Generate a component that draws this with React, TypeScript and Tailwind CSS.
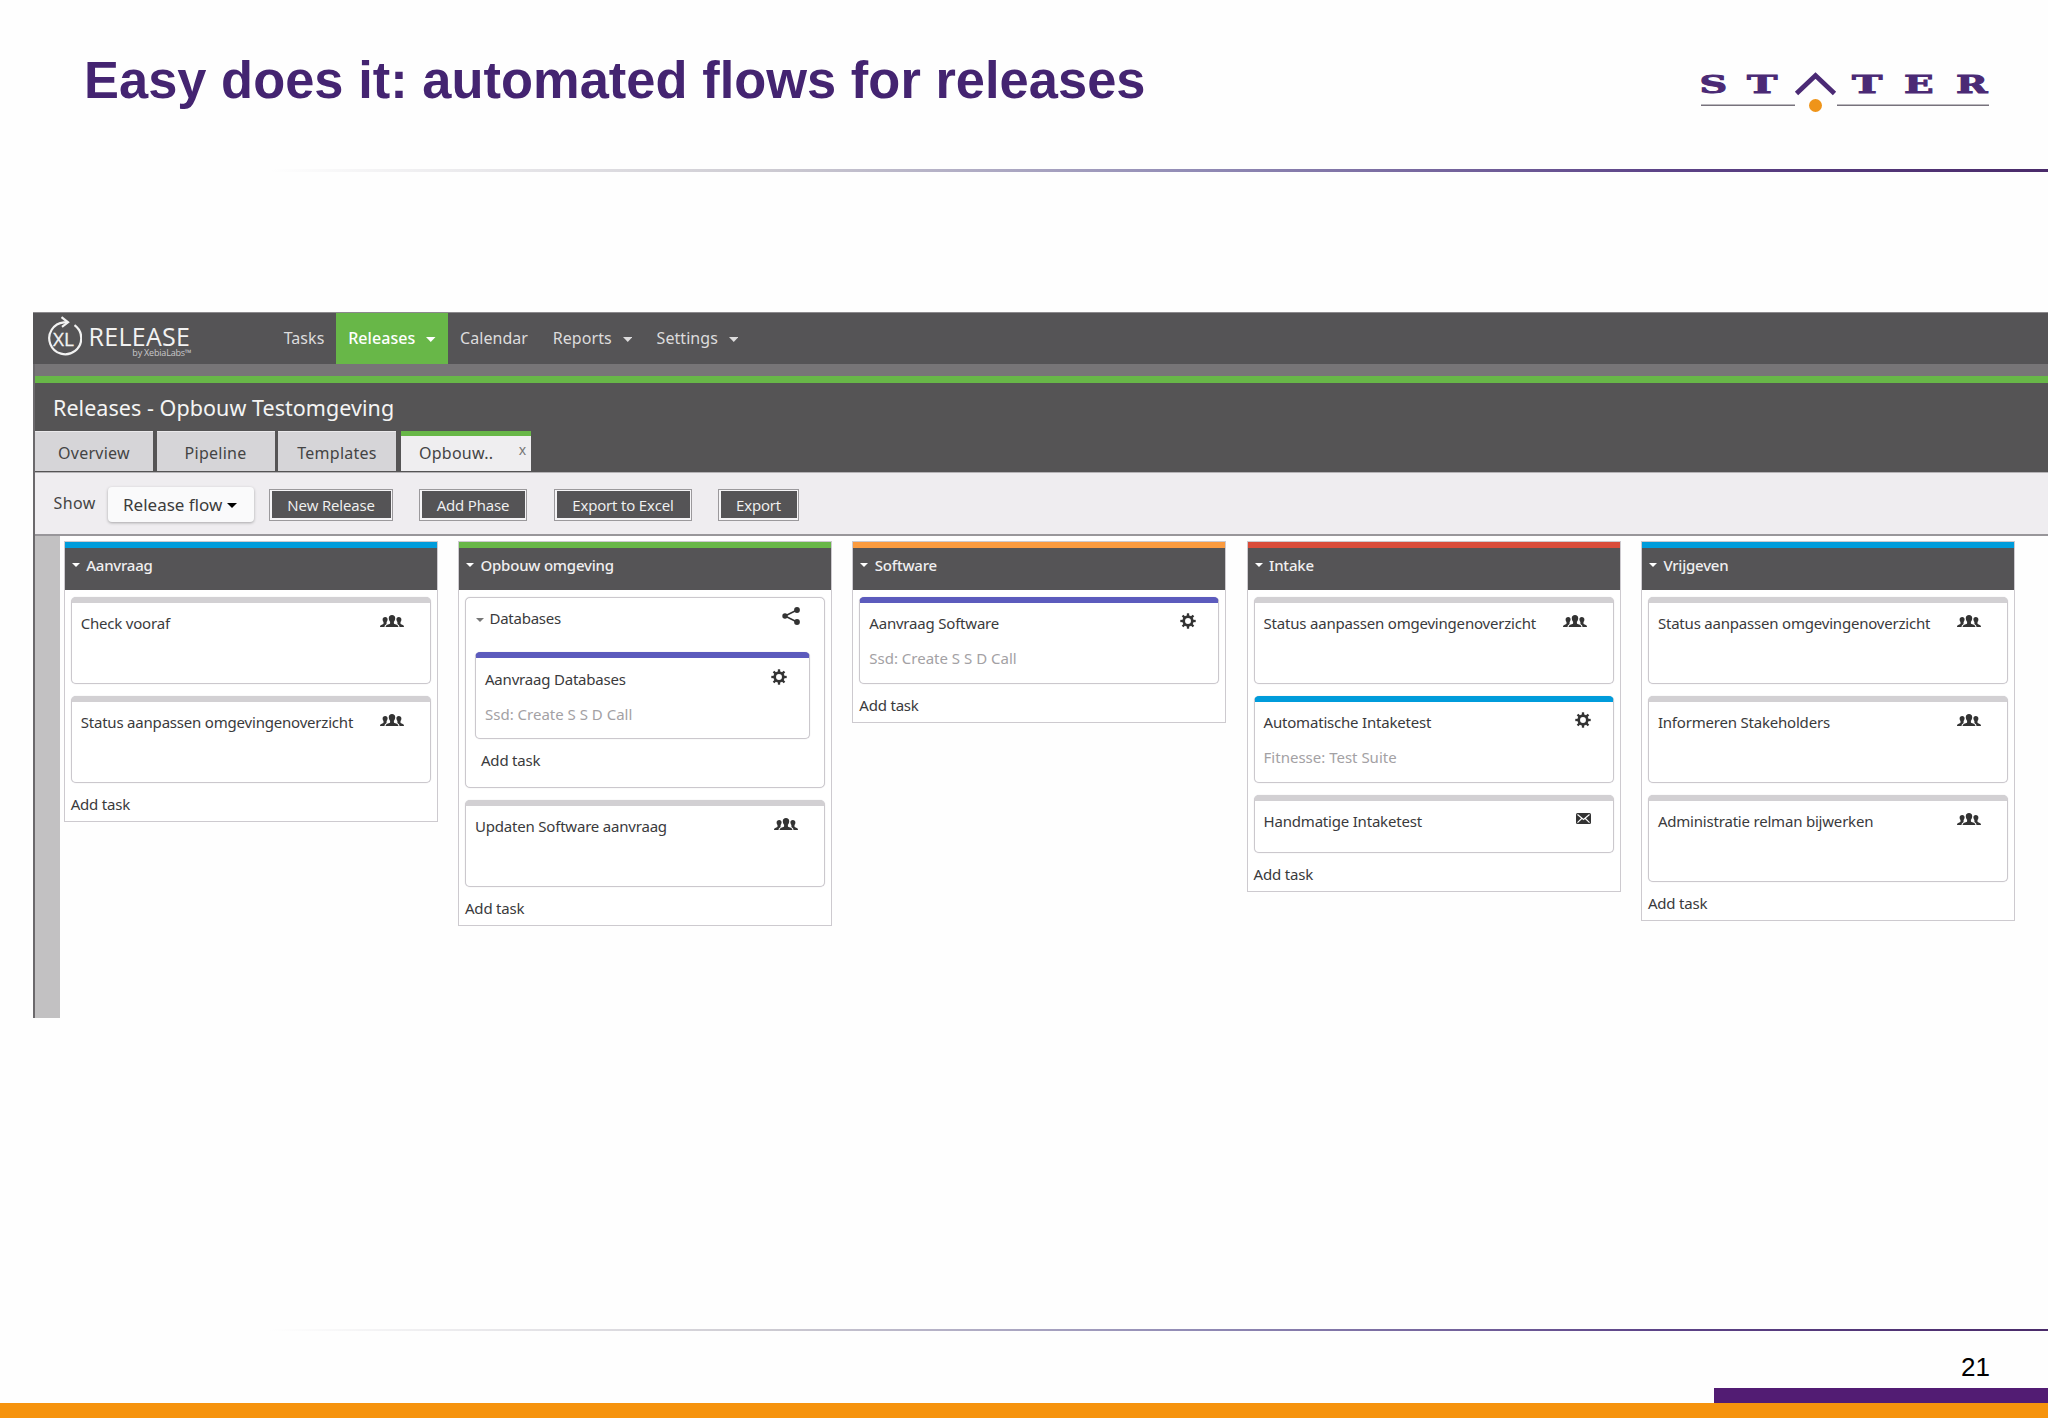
import React from 'react';

type IconName = 'users' | 'gear' | 'mail';

type Task = {
    title: string;
    icon: IconName;
    sub?: string;
    tone?: 'grey' | 'purple' | 'blue';
    small?: boolean;
};

type Group = { group: string; tasks: Task[] };

type Phase = { name: string; bar: string; items: (Task | Group)[] };

const STATUS = 'Status aanpassen omgevingenoverzicht';

const phases: Phase[] = [
    {
        name: 'Aanvraag',
        bar: 'bg-[#009cdb]',
        items: [
            { title: 'Check vooraf', icon: 'users' },
            { title: STATUS, icon: 'users' },
        ],
    },
    {
        name: 'Opbouw omgeving',
        bar: 'bg-[#68b748]',
        items: [
            {
                group: 'Databases',
                tasks: [{ title: 'Aanvraag Databases', icon: 'gear', sub: 'Ssd: Create S S D Call', tone: 'purple' }],
            },
            { title: 'Updaten Software aanvraag', icon: 'users' },
        ],
    },
    {
        name: 'Software',
        bar: 'bg-[#fb9b3f]',
        items: [{ title: 'Aanvraag Software', icon: 'gear', sub: 'Ssd: Create S S D Call', tone: 'purple' }],
    },
    {
        name: 'Intake',
        bar: 'bg-[#d94c3a]',
        items: [
            { title: STATUS, icon: 'users' },
            { title: 'Automatische Intaketest', icon: 'gear', sub: 'Fitnesse: Test Suite', tone: 'blue' },
            { title: 'Handmatige Intaketest', icon: 'mail', small: true },
        ],
    },
    {
        name: 'Vrijgeven',
        bar: 'bg-[#009cdb]',
        items: [
            { title: STATUS, icon: 'users' },
            { title: 'Informeren Stakeholders', icon: 'users' },
            { title: 'Administratie relman bijwerken', icon: 'users' },
        ],
    },
];

const tones = {
    grey: 'border-t-[#d2d0d3]',
    purple: 'border-t-[#5c5bbd]',
    blue: 'border-t-[#009cdb]',
};

const Caret = ({ className = '' }: { className?: string }) => (
    <svg viewBox="0 0 10 5" preserveAspectRatio="none" className={`shrink-0 ${className}`} fill="currentColor">
        <path d="M0 0h10L5 5z" />
    </svg>
);

const UsersIcon = () => (
    <svg viewBox="0 0 24 12.5" className="w-6 h-[12.5px] mt-[1.5px] mr-[2.5px]" fill="#333">
        <path d="M5.2 2c1.700 0 2.500 1.100 2.400 2.600-.1 1.200-.5 2-1 2.500v1.300c0 .6-.4 1-.8 1.300-.9.500-1.200 1.100-1.300 2.600H0c0-1.400.3-2 1.300-2.400 1.300-.4 2.200-.7 2.200-1.300V7.100c-.6-.5-.9-1.300-.9-2.500C2.600 3.100 3.600 2 5.200 2z" />
        <path d="M18.800 2c-1.700 0-2.500 1.100-2.400 2.600.1 1.200.5 2 1 2.500v1.300c0 .6.400 1 .8 1.300.9.500 1.200 1.100 1.300 2.600H24c0-1.400-.3-2-1.300-2.400-1.300-.4-2.200-.7-2.200-1.300V7.100c.6-.5.9-1.300.9-2.500C21.400 3.100 20.400 2 18.800 2z" />
        <path d="M12 0c2.200 0 3.300 1.400 3.200 3.400-.1 1.600-.7 2.700-1.300 3.300v1.500c0 .6 1.100.9 2.300 1.400 1.500.5 2.200 1.200 2.200 2.800H5.600c0-1.600.7-2.300 2.200-2.800 1.200-.5 2.300-.8 2.300-1.400V6.700C9.500 6.100 8.900 5 8.800 3.400 8.700 1.400 9.800 0 12 0z" />
    </svg>
);

const GearIcon = () => (
    <svg viewBox="-8 -8 16 16" className="size-4 -mr-px" stroke="#333" fill="none">
        <circle r="4.300" strokeWidth="2.700" />
        {[0, 45, 90, 135, 180, 225, 270, 315].map((a) => (
            <path key={a} d="M0 -4.800V-7.700" strokeWidth="2.300" transform={`rotate(${a})`} />
        ))}
    </svg>
);

const MailIcon = () => (
    <svg viewBox="0 0 15 11" className="w-[15px] h-[11px] mt-[2px] -mr-px">
        <rect width="15" height="11" rx="1.500" fill="#333" />
        <path d="M1.500 1.500l6 5 6-5M1.500 9.700l4.200-4.200M13.500 9.700l-4.200-4.200" stroke="#fff" strokeWidth="1.100" fill="none" />
    </svg>
);

const ShareIcon = () => (
    <svg viewBox="0 0 18 18" className="size-[18px] mr-px -mt-px" fill="#333" stroke="#333">
        <path d="M15 3L3 9l12 6" fill="none" strokeWidth="1.600" />
        <circle cx="3" cy="9" r="2.700" stroke="none" />
        <circle cx="15" cy="3" r="2.900" stroke="none" />
        <circle cx="15" cy="15" r="2.900" stroke="none" />
    </svg>
);

const icons = { users: UsersIcon, gear: GearIcon, mail: MailIcon };

const TaskCard = ({ task }: { task: Task }) => {
    const Icon = icons[task.icon];
    return (
        <div
            className={`${task.small ? 'h-[58px]' : 'h-[87px]'} bg-white rounded-[5px] border border-[#cbc8cd] border-t-[6px] ${tones[task.tone ?? 'grey']} shadow-[0_0_1px_#cbc8cd] pl-[9px] pr-[23px] pt-[10.500px]`}
        >
            <div className="flex justify-between items-start">
                <span className="text-[15px] leading-5 tracking-[-0.2px] text-[#3a3a3c] whitespace-nowrap">{task.title}</span>
                <Icon />
            </div>
            {task.sub && <div className="mt-[15px] text-[15px] leading-5 text-[#a3a1a4]">{task.sub}</div>}
        </div>
    );
};

const AddTask = ({ className }: { className: string }) => (
    <div className={`text-[15px] leading-5 tracking-[-0.2px] text-[#3a3a3c] ${className}`}>Add task</div>
);

const GroupCard = ({ item }: { item: Group }) => (
    <div className="h-[191px] rounded-[5px] border border-[#cbc8cd] shadow-[0_0_1px_#cbc8cd] bg-white">
        <div className="flex items-start pl-[10px] pr-[23px] pt-[10px] h-[54.500px]">
            <Caret className="w-[8px] h-[4px] mt-[10.500px] mr-[5.500px] text-[#777]" />
            <span className="flex-1 text-[15px] leading-5 tracking-[-0.25px] text-[#3a3a3c]">{item.group}</span>
            <ShareIcon />
        </div>
        <div className="pl-[9px] pr-[14px]">
            {item.tasks.map((t) => (
                <TaskCard key={t.title} task={t} />
            ))}
        </div>
        <AddTask className="pl-[15px] mt-[11px]" />
    </div>
);

const PhaseColumn = ({ phase }: { phase: Phase }) => (
    <div className="w-[374px] shrink-0 border border-[#cdcacf] bg-white">
        <div className={`h-[6px] ${phase.bar}`} />
        <div className="h-[42.500px] bg-[#555456] flex items-start pl-[7px] pt-[7px]">
            <Caret className="w-[8px] h-[4px] mt-[8.500px] mr-[6.500px] text-white" />
            <span className="text-[15px] leading-5 font-medium tracking-[-0.22px] text-[#f0eff0]">{phase.name}</span>
        </div>
        <div className="px-[6px] pt-[6.500px] pb-[7px]">
            <div className="flex flex-col gap-[12.200px]">
                {phase.items.map((item) =>
                    'group' in item ? (
                        <GroupCard key={item.group} item={item} />
                    ) : (
                        <TaskCard key={item.title} task={item} />
                    )
                )}
            </div>
            <AddTask className="mt-[11.300px]" />
        </div>
    </div>
);

const navItems = [
    { label: 'Tasks', className: 'w-[64px]' },
    { label: 'Releases', className: 'w-[112px] bg-[#68b748] text-white font-medium', caret: true },
    { label: 'Calendar', className: 'w-[92px]' },
    { label: 'Reports', className: 'w-[105px]', caret: true },
    { label: 'Settings', className: 'w-[105px]', caret: true },
];

const buttons = [
    { label: 'New Release', className: 'w-[124px] mr-[26px]' },
    { label: 'Add Phase', className: 'w-[108px] mr-[27px]' },
    { label: 'Export to Excel', className: 'w-[138px] mr-[26px]' },
    { label: 'Export', className: 'w-[81px]' },
];

const StaterLogo = () => (
    <svg viewBox="0 0 290 36" className="w-[290px] h-9 overflow-visible" fill="#4b2a75">
        <g fontFamily='"DejaVu Serif", serif' fontWeight="bold" fontSize="24" stroke="#4b2a75" strokeWidth="0.900">
            <text transform="translate(-0.500 20.600) scale(1.600 1)">S</text>
            <text transform="translate(47 20.600) scale(1.700 1)">T</text>
            <text transform="translate(152 20.600) scale(1.700 1)">T</text>
            <text transform="translate(204 20.600) scale(1.620 1)">E</text>
            <text transform="translate(256 20.600) scale(1.580 1)">R</text>
        </g>
        <path d="M96.500 21.500L115.500 3.500L134.500 21.500" fill="none" stroke="#4b2a75" strokeWidth="4.800" />
        <path d="M1 33.200h94M137 33.200h152" stroke="#77727c" strokeWidth="1.500" />
    </svg>
);

const XlLogo = () => (
    <svg viewBox="0 0 36 40" className="w-9 h-10" fill="none" stroke="#f2f2f2" strokeWidth="2.200">
        <path d="M28.500 9.200A16 16 0 1 1 18 6.300h3" />
        <path d="M15.500 1.200l6.500 5.100-6 4.500" />
        <text x="7" y="29.800" fill="#f2f2f2" stroke="#f2f2f2" strokeWidth="0.300" fontSize="19" fontFamily='"Open Sans", sans-serif'>
            XL
        </text>
    </svg>
);

const Rule = () => (
    <div className="ml-[270px] h-[2.500px] shrink-0 bg-[linear-gradient(to_right,#fefefe_0%,#cdcbd2_28%,#918bb5_52%,#5d4488_78%,#4a2b6a_100%)]" />
);

const App = () => {
    return (
        <div className="w-[2048px] h-[1418px] overflow-hidden flex flex-col bg-[#fefefe] font-['Noto_Sans',sans-serif]">
            {/* Slide heading */}
            <header className="h-[169px] shrink-0 flex justify-between items-start pl-[84px] pr-[58px]">
                <h1 className="mt-[49.500px] text-[52.400px] leading-[60px] tracking-[0.04px] font-bold text-[#442471] whitespace-nowrap font-['Liberation_Sans',sans-serif]">
                    Easy does it: automated flows for releases
                </h1>
                <div className="relative mt-[72px]">
                    <StaterLogo />
                    <span className="absolute left-[108.500px] top-[26.500px] size-[13.500px] rounded-full bg-[#ef9419]" />
                </div>
            </header>
            <Rule />

            {/* Application */}
            <section className="mt-[140.500px] ml-[33px] h-[706px] shrink-0 flex flex-col">
                <nav className="h-[51.500px] shrink-0 bg-[#555456] border-t border-[#8b898c] flex text-[16px] tracking-[0.05px] text-[#dddcdd]">
                    <div className="w-[239px] pl-[12.500px] flex items-start">
                        <div className="mt-[3px]">
                            <XlLogo />
                        </div>
                        <div className="ml-[7px] mt-[9px] w-[104px] font-['Open_Sans',sans-serif] text-[#f2f2f2]">
                            <div className="text-[25px] leading-[28px] tracking-[0.3px]">RELEASE</div>
                            <div className="text-[9px] leading-[10px] -mt-[2px] pr-px tracking-[-0.2px] text-right whitespace-nowrap text-[#c9c8ca]">
                                by XebiaLabs™
                            </div>
                        </div>
                    </div>
                    {navItems.map((n) => (
                        <div key={n.label} className={`flex items-center justify-center ${n.className}`}>
                            {n.label}
                            {n.caret && <Caret className="w-[9.500px] h-[5px] ml-[11px] mt-[2px]" />}
                        </div>
                    ))}
                </nav>

                <div className="flex-1 flex flex-col border-l-2 border-[#6b696c]">
                    <div className="h-[12.500px] shrink-0 bg-[#777577]" />
                    <div className="h-[7px] shrink-0 bg-[#68b748]" />
                    <div className="h-[88.500px] shrink-0 bg-[#555455]">
                        <h2 className="h-12 leading-[50px] pl-[18px] text-[21.500px] tracking-[0.05px] text-[#f4f4f4]">
                            Releases - Opbouw Testomgeving
                        </h2>
                        <div className="flex text-[16px] tracking-[0.25px] text-[#444]">
                            {['Overview', 'Pipeline', 'Templates'].map((t) => (
                                <div
                                    key={t}
                                    className="w-[118px] h-10 mr-[3.500px] pt-[2px] flex items-center justify-center bg-[#d6d5d8] border-t border-[#eae9eb]"
                                >
                                    {t}
                                </div>
                            ))}
                            <div className="relative ml-px w-[130px] h-10 flex items-center pl-[18.500px] pb-[1.500px] bg-[#efeef0] border-t-[5px] border-[#68b748]">
                                Opbouw..
                                <span className="absolute right-[4px] top-[5px] text-[14px] leading-[18px] text-[#777]">x</span>
                            </div>
                        </div>
                    </div>

                    {/* Toolbar */}
                    <div className="h-[64px] shrink-0 flex items-start bg-[#efedf0] border-t border-t-[#b5b3b6] border-b-2 border-b-[#98969a] pl-[18.500px]">
                        <span className="mt-[20px] w-[54.500px] text-[16px] leading-5 tracking-[0.4px] text-[#444]">Show</span>
                        <div className="mt-[14px] mr-[15.500px] w-[145.500px] h-[35.500px] pl-[15px] pt-px flex items-center rounded-[4px] bg-[#fafafb] shadow-[0_1px_3px_rgba(0,0,0,0.3)] text-[17px] text-[#3c3c3c]">
                            Release flow
                            <Caret className="w-[10px] h-[5px] ml-[5px] mt-[2px] text-black" />
                        </div>
                        {buttons.map((b) => (
                            <button
                                key={b.label}
                                className={`mt-[16px] h-8 p-[1.500px] border border-[#9b999c] bg-[#f5f4f6] ${b.className}`}
                            >
                                <span className="h-full pt-[1.500px] flex items-center justify-center bg-[#555456] text-[15px] tracking-[-0.15px] text-[#f2f2f2] font-['Open_Sans',sans-serif]">
                                    {b.label}
                                </span>
                            </button>
                        ))}
                    </div>

                    {/* Release flow board */}
                    <div className="flex-1 flex items-start bg-[#fefefe]">
                        <div className="w-[25px] h-full shrink-0 bg-[#c2c1c2]" />
                        <div className="ml-[3.700px] mt-[5px] flex items-start gap-[20.300px]">
                            {phases.map((p) => (
                                <PhaseColumn key={p.name} phase={p} />
                            ))}
                        </div>
                    </div>
                </div>
            </section>

            {/* Slide footer */}
            <footer className="flex-1 flex flex-col justify-end">
                <Rule />
                <div className="h-[57px] pr-[58px] pt-[21px] text-right text-[26px] leading-[30px] text-black font-['Liberation_Sans',sans-serif]">
                    21
                </div>
                <div className="ml-[1714px] h-[15px] bg-[#521c73]" />
                <div className="h-[15px] bg-[#f6930d]" />
            </footer>
        </div>
    );
};

export default App;
